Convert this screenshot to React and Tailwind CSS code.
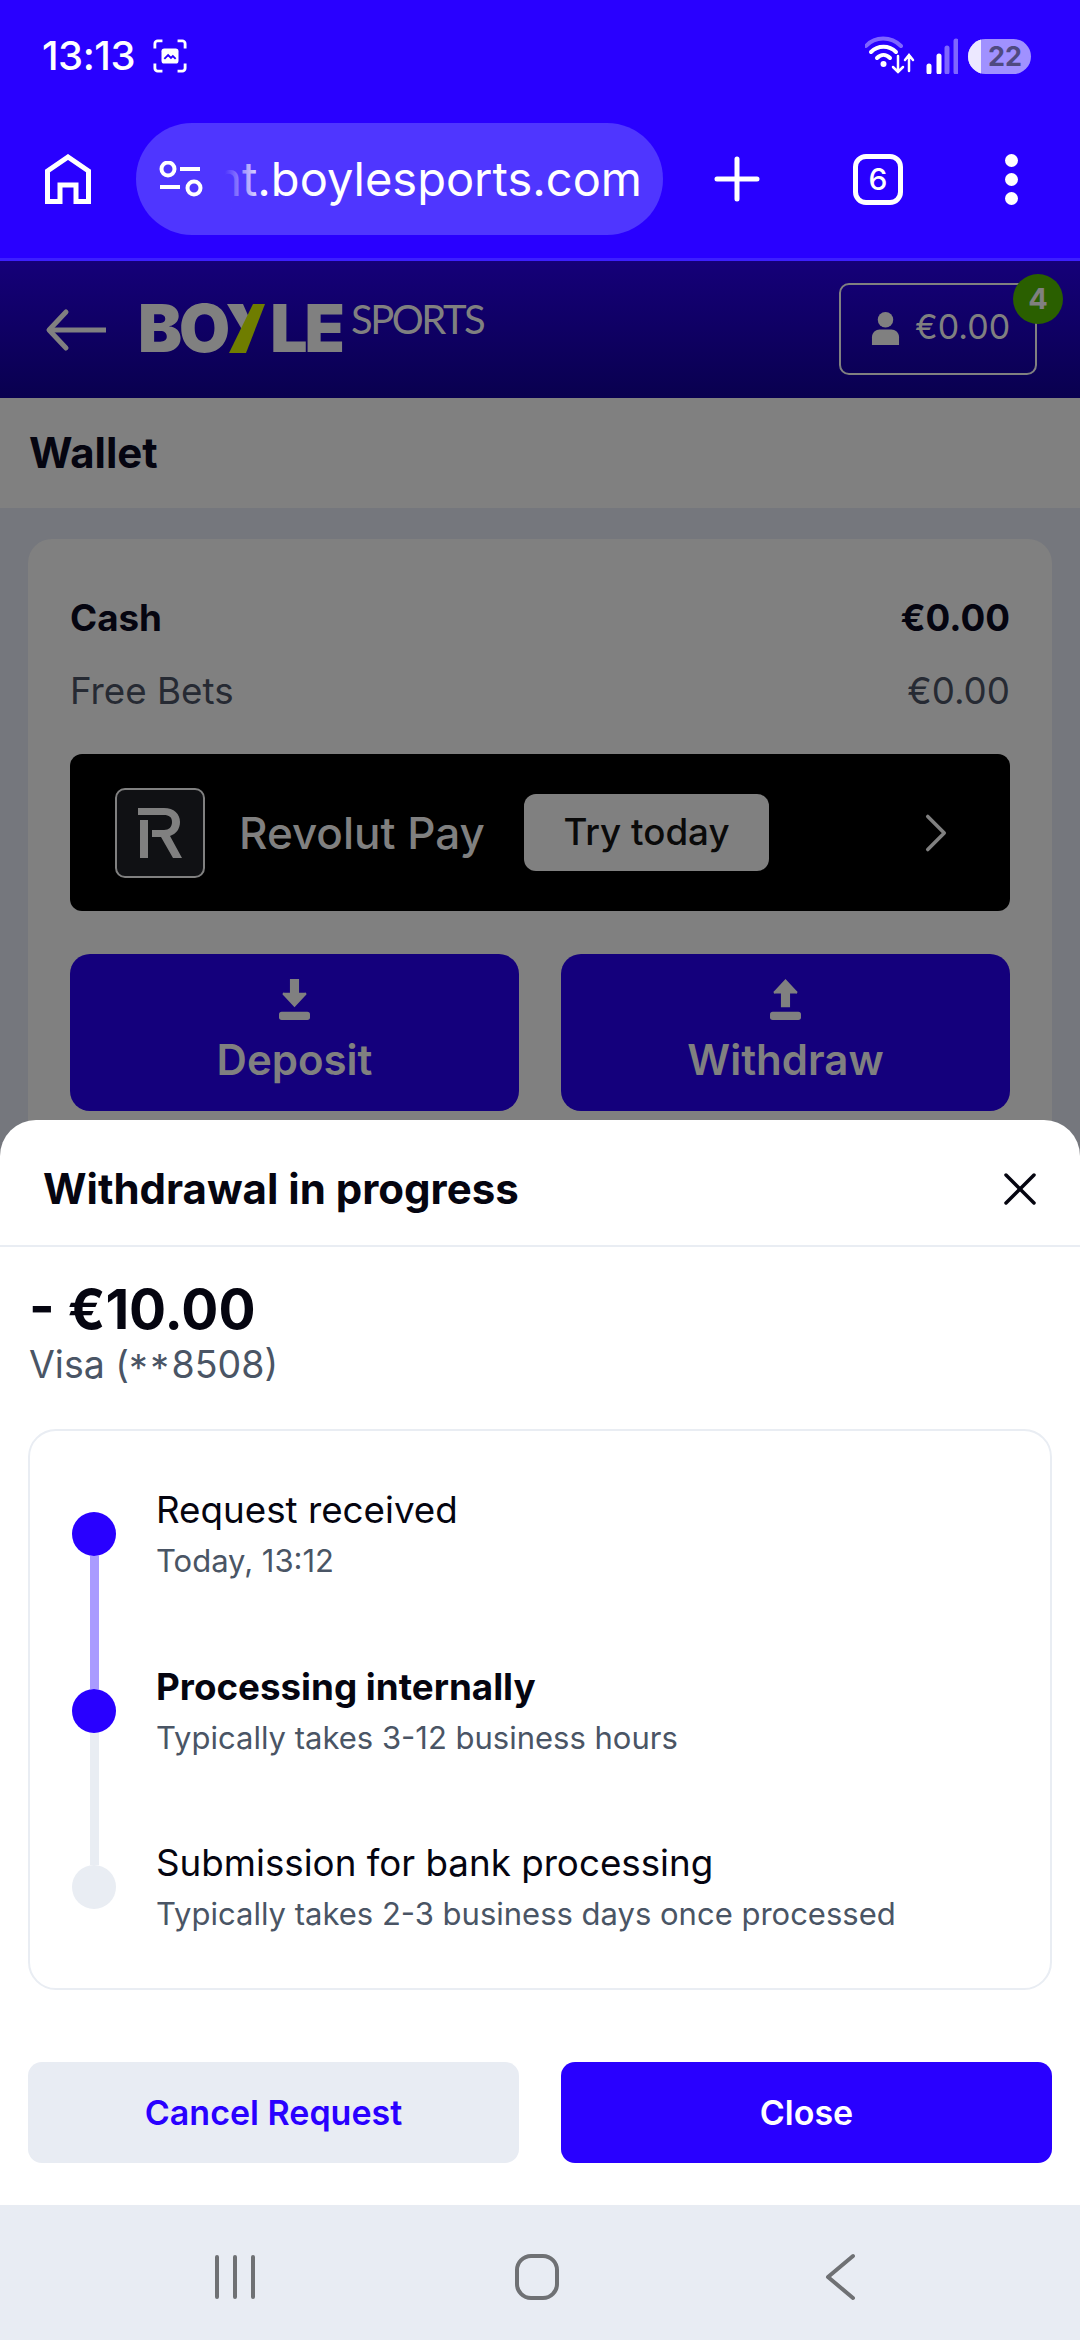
import { X, ChevronRight } from 'lucide-react';

const font = "font-['Inter',sans-serif]";

const StatusBar = () => (
    <div className="h-[112px] flex items-center justify-between pl-[42px] pr-[49px]">
        <div className="flex items-center gap-[18px]">
            <span className="text-[40px] font-medium text-white tracking-[-0.5px]">13:13</span>
            <svg width="34" height="34" viewBox="0 0 36 36" fill="none" stroke="#fff" strokeWidth="3">
                <path d="M2 10V5a3 3 0 0 1 3-3h5M26 2h5a3 3 0 0 1 3 3v5M34 26v5a3 3 0 0 1-3 3h-5M10 34H5a3 3 0 0 1-3-3v-5" />
                <rect x="9" y="10" width="18" height="16" rx="3" fill="#fff" stroke="none" />
                <path d="M12 21l4-4 3 3 2-2 3 3" stroke="#2900ff" strokeWidth="2" />
            </svg>
        </div>
        <div className="flex items-center">
            <svg width="50" height="40" viewBox="0 0 50 40" fill="none" strokeLinecap="round">
                <path d="M1 10 C10 0 26 0 36 10" stroke="#7f66ff" strokeWidth="4" />
                <path d="M6 16 C13 9 24 9 31 16" stroke="#fff" strokeWidth="4" />
                <path d="M12 22 C16 18 21 18 25 22" stroke="#fff" strokeWidth="4" />
                <circle cx="18.500" cy="28" r="3" fill="#fff" />
                <path d="M33 20v16M28 31l5 5 5-5M44 35V19M40 24l4-5 4 5" stroke="#fff" strokeWidth="2.500" />
            </svg>
            <svg className="ml-[11px]" width="32" height="36" viewBox="0 0 32 36" strokeLinecap="round">
                <path d="M3 34v-6M13 34V18" stroke="#fff" strokeWidth="5" />
                <path d="M21 34V10M30 34V3" stroke="#7f66ff" strokeWidth="5" />
            </svg>
            <div className="ml-[10px] w-[63px] h-[35px] rounded-full bg-[#a091ff] overflow-hidden relative flex items-center justify-end pr-[9px]">
                <div className="absolute left-0 top-0 bottom-0 w-[13px] bg-[#ece8ff]" />
                <span className="text-[27px] font-bold leading-none text-[#4f4a80]">22</span>
            </div>
        </div>
    </div>
);

const BrowserBar = () => (
    <div className="flex items-center h-[146px] pb-[12px]">
        <svg className="ml-[45px]" width="46" height="50" viewBox="0 0 46 50" fill="none" stroke="#fff" strokeWidth="5">
            <path d="M2.500 17 23 3l20.500 14v30.500H31V31H15v16.500H2.500z" />
        </svg>
        <div className="ml-[45px] w-[527px] h-[112px] rounded-full bg-[#4f36ff] flex items-center overflow-hidden">
            <svg className="ml-[23px] shrink-0" width="44" height="36" viewBox="0 0 44 36" fill="none" stroke="#fff" strokeWidth="4">
                <circle cx="9" cy="8" r="6.500" />
                <path d="M21 8h20M1 26h20" />
                <circle cx="35" cy="27" r="6.500" />
            </svg>
            <div className="ml-[22px] w-[417px] shrink-0 overflow-hidden flex justify-end relative">
                <span className="text-[47px] text-white whitespace-nowrap leading-[64px]">nt.boylesports.com</span>
                <div className="absolute left-0 top-0 bottom-0 w-[40px] bg-gradient-to-r from-[#4f36ff] to-transparent" />
            </div>
        </div>
        <svg className="ml-[51px]" width="46" height="46" viewBox="0 0 46 46" stroke="#fff" strokeWidth="5" strokeLinecap="round">
            <path d="M23 3v40M3 23h40" />
        </svg>
        <div className="ml-[93px] w-[50px] h-[51px] rounded-[13px] border-[5px] border-white flex items-center justify-center text-white text-[30px] font-medium leading-none">6</div>
        <div className="ml-[102px] flex flex-col gap-[6px]">
            <div className="w-[13px] h-[13px] rounded-full bg-white" />
            <div className="w-[13px] h-[13px] rounded-full bg-white" />
            <div className="w-[13px] h-[13px] rounded-full bg-white" />
        </div>
    </div>
);

const Logo = () => (
    <div className="flex items-start ml-[29px] mb-[3px]">
        <div className="flex items-center h-[49px] text-[66px] font-black text-[#808080] leading-none tracking-[-3px]">
            <span>BO</span>
            <svg className="ml-[-1px] mr-[2px]" width="42" height="49" viewBox="0 0 42 49">
                <path d="M1 0h16l7 16-6 13z" fill="#808080" />
                <path d="M27 0h12L20 49H3z" fill="#6f7d00" />
            </svg>
            <span>LE</span>
        </div>
        <span className="ml-[9px] text-[40px] font-normal text-[#808080] leading-[30px] tracking-[-2.500px] font-['Lato',sans-serif]">SPORTS</span>
    </div>
);

const Header = () => (
    <div className="h-[137px] bg-gradient-to-b from-[#150079] to-[#09004f] flex items-center">
        <svg className="ml-[45px]" width="64" height="44" viewBox="0 0 64 44" fill="none" stroke="#808080" strokeWidth="5" strokeLinecap="round" strokeLinejoin="round">
            <path d="M21 4 4 22l17 18" />
            <path d="M4 22h57" strokeLinecap="butt" />
        </svg>
        <Logo />
        <div className="ml-auto mr-[43px] mt-[-2px] w-[198px] h-[92px] rounded-[10px] border-2 border-[#808080] relative flex items-center pl-[30px]">
            <svg width="29" height="33" viewBox="0 0 30 34" fill="#808080">
                <circle cx="15" cy="8" r="8" />
                <path d="M1 34V26c0-5 4-8 8-8h12c4 0 8 3 8 8v8z" />
            </svg>
            <span className="ml-[15px] mb-[4px] text-[34px] text-[#808080] leading-none">€0.00</span>
            <div className="absolute top-[-11px] right-[-28px] w-[50px] h-[50px] rounded-full bg-[#2a5f00] flex items-center justify-center text-[#808080] text-[29px] font-bold leading-none">4</div>
        </div>
    </div>
);

const ActionButton = ({ label, up }) => (
    <div className="h-[157px] rounded-[20px] bg-[#14007c] flex flex-col items-center pt-[25px]">
        <svg width="33" height="41" viewBox="0 0 36 45" fill="#808080">
            {up
                ? <path d="M18 0 30 13a1 1 0 0 1-1 3h-6v15H13V16H7a1 1 0 0 1-1-3z" />
                : <path d="M13 0h10v15h6a1 1 0 0 1 1 3L18 31 6 18a1 1 0 0 1 1-3h6z" />}
            <rect x="1" y="36" width="34" height="9" rx="3" />
        </svg>
        <span className="mt-[14px] text-[42px] font-semibold text-[#808080] leading-[52px]">{label}</span>
    </div>
);

const WalletCard = () => (
    <div className="mx-[28px] mt-[31px] rounded-t-[24px] bg-[#808080] px-[42px] pt-[59px] pb-[40px]">
        <div className="flex justify-between items-center h-[40px] text-[36.750px] font-bold text-[#050510] leading-none">
            <span>Cash</span>
            <span>€0.00</span>
        </div>
        <div className="flex justify-between items-center h-[40px] mt-[33px] text-[36.750px] text-[#262a33] leading-none">
            <span>Free Bets</span>
            <span>€0.00</span>
        </div>
        <div className="mt-[43px] h-[157px] rounded-[12px] bg-black flex items-center pl-[45px] pr-[41px]">
            <div className="w-[90px] h-[90px] rounded-[10px] bg-[#101114] border-2 border-[#808080] flex items-center justify-center shrink-0">
                <svg width="44" height="50" viewBox="0 0 44 50" fill="#808080">
                    <path d="M2 12h8v38H2z" />
                    <path d="M0 0h26c10 0 16 6 16 14 0 7-4 12-10 14l12 22h-9L23 29h-9v-7h12c5 0 8-3 8-8s-3-7-8-7H0z" />
                </svg>
            </div>
            <div className="ml-[34px] w-[285px] shrink-0 text-[44px] font-medium text-[#808080] leading-none">Revolut Pay</div>
            <div className="w-[245px] h-[77px] rounded-[12px] bg-[#808080] flex items-center justify-center text-[36.750px] font-medium text-[#0a0a0a] leading-none">Try today</div>
            <ChevronRight className="ml-auto" size={66} color="#808080" strokeWidth={1.3} />
        </div>
        <div className="mt-[43px] grid grid-cols-2 gap-[42px]">
            <ActionButton label="Deposit" up={false} />
            <ActionButton label="Withdraw" up />
        </div>
    </div>
);

const steps = [
    { title: 'Request received', sub: 'Today, 13:12', dot: 'bg-[#2900ff]', line: 'bg-[#a99bff]' },
    { title: 'Processing internally', sub: 'Typically takes 3-12 business hours', dot: 'bg-[#2900ff]', line: 'bg-[#e9edf3]', bold: true },
    { title: 'Submission for bank processing', sub: 'Typically takes 2-3 business days once processed', dot: 'bg-[#e9edf3]' },
];

const Step = ({ title, sub, dot, line, bold }) => (
    <div className="flex h-[176.500px]">
        <div className="w-[44px] shrink-0 flex flex-col items-center pt-[25px]">
            <div className={`w-[44px] h-[44px] rounded-full shrink-0 ${dot}`} />
            {line && <div className={`w-[9px] flex-1 -mb-[25px] ${line}`} />}
        </div>
        <div className="ml-[40px]">
            <div className={`text-[36.750px] leading-[46px] text-[#050510] ${bold ? 'font-bold' : 'font-normal'}`}>{title}</div>
            <div className="text-[31px] leading-[38px] mt-[9px] text-[#4a5565]">{sub}</div>
        </div>
    </div>
);

const Sheet = () => (
    <div className="absolute left-0 right-0 top-[1120px] bottom-0 bg-white rounded-t-[36px] flex flex-col">
        <div className="h-[127px] border-b-2 border-[#e9edf3] flex items-center justify-between pl-[43px] pr-[32px] pt-[12px] shrink-0">
            <span className="text-[42px] font-bold text-[#050510] leading-none">Withdrawal in progress</span>
            <X size={56} color="#050510" strokeWidth={1.5} />
        </div>
        <div className="px-[29px] pt-[28px]">
            <div className="text-[55px] font-bold text-[#050510] leading-[68px]">- €10.00</div>
            <div className="text-[37.500px] text-[#4a5565] leading-[43px]">Visa (<span className="inline-block translate-y-[4px] tracking-[2.500px]">**</span>8508)</div>
        </div>
        <div className="mx-[28px] mt-[43px] h-[561px] rounded-[28px] border-2 border-[#e9edf3] pl-[42px] pt-[56px] shrink-0">
            {steps.map((s) => <Step key={s.title} {...s} />)}
        </div>
        <div className="mx-[28px] mt-[72px] grid grid-cols-2 gap-[42px] shrink-0">
            <div className="h-[101px] rounded-[14px] bg-[#e8ecf3] flex items-center justify-center text-[34px] font-semibold text-[#2900ff]">Cancel Request</div>
            <div className="h-[101px] rounded-[14px] bg-[#2900ff] flex items-center justify-center text-[34px] font-semibold text-white">Close</div>
        </div>
        <div className="mt-auto h-[135px] bg-[#e8ecf3] flex items-center pl-[212px] pt-[9px] shrink-0">
            <svg width="46" height="46" viewBox="0 0 46 46" stroke="#6f7174" strokeWidth="4" strokeLinecap="round">
                <path d="M5 3v40M23 3v40M41 3v40" />
            </svg>
            <svg className="ml-[256px]" width="46" height="48" viewBox="0 0 46 48" fill="none" stroke="#6f7174" strokeWidth="4">
                <rect x="3" y="3" width="40" height="42" rx="14" />
            </svg>
            <svg className="ml-[264px]" width="32" height="48" viewBox="0 0 32 48" fill="none" stroke="#6f7174" strokeWidth="4" strokeLinecap="round" strokeLinejoin="round">
                <path d="M29 3 4 24l25 21" />
            </svg>
        </div>
    </div>
);

export default function App() {
    return (
        <div className={`w-[1080px] h-[2340px] relative overflow-hidden bg-[#75777d] ${font}`}>
            <div className="bg-[#2900ff] border-b-[3px] border-[#3d1fff]">
                <StatusBar />
                <BrowserBar />
            </div>
            <Header />
            <div className="h-[110px] bg-[#808080] flex items-center pl-[29px]">
                <span className="text-[42px] font-bold text-[#050510] leading-none">Wallet</span>
            </div>
            <WalletCard />
            <Sheet />
        </div>
    );
}
